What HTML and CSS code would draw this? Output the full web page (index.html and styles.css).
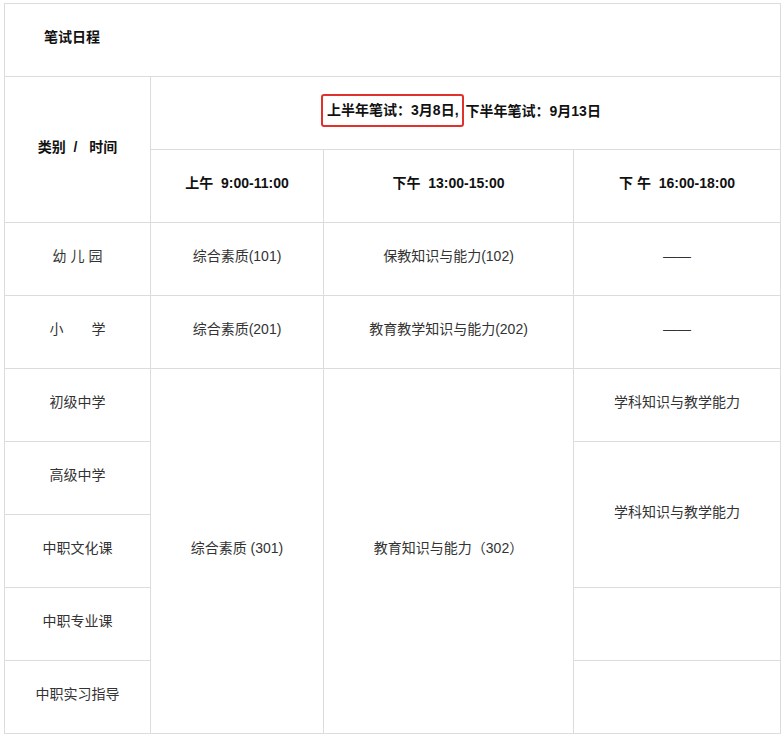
FILE: index.html
```html
<!DOCTYPE html>
<html lang="zh">
<head>
<meta charset="utf-8">
<link rel="stylesheet" href="styles.css">
</head>
<body>
<table class="sched">
  <colgroup>
    <col class="c1"><col class="c2"><col class="c3"><col class="c4">
  </colgroup>
  <tr>
    <td colspan="4" class="title">笔试日程</td>
  </tr>
  <tr>
    <td rowspan="2" class="bold">类别 &nbsp;/ &nbsp;&nbsp;时间</td>
    <td colspan="3" class="bold"><span class="mark">上半年笔试：3月8日,</span>下半年笔试：9月13日</td>
  </tr>
  <tr>
    <td class="bold">上午&nbsp; 9:00-11:00</td>
    <td class="bold">下午&nbsp; 13:00-15:00</td>
    <td class="bold">下 午&nbsp; 16:00-18:00</td>
  </tr>
  <tr>
    <td>幼 儿 园</td>
    <td>综合素质(101)</td>
    <td>保教知识与能力(102)</td>
    <td>——</td>
  </tr>
  <tr>
    <td>小　　学</td>
    <td>综合素质(201)</td>
    <td>教育教学知识与能力(202)</td>
    <td>——</td>
  </tr>
  <tr>
    <td>初级中学</td>
    <td rowspan="5">综合素质 (301)</td>
    <td rowspan="5">教育知识与能力（302）</td>
    <td>学科知识与教学能力</td>
  </tr>
  <tr>
    <td>高级中学</td>
    <td rowspan="2">学科知识与教学能力</td>
  </tr>
  <tr>
    <td>中职文化课</td>
  </tr>
  <tr>
    <td>中职专业课</td>
    <td></td>
  </tr>
  <tr>
    <td>中职实习指导</td>
    <td></td>
  </tr>
</table>
</body>
</html>
```
FILE: styles.css
```css
html, body {
  background: #fff;
}
body {
  margin: 3px 0 0 4px;
  font-family: "Liberation Sans", "Noto Sans CJK SC", sans-serif;
  font-size: 14px;
  color: #333;
}
.sched {
  border-collapse: collapse;
  table-layout: fixed;
  width: 776px;
}
.c1 { width: 146px; }
.c2 { width: 173px; }
.c3 { width: 250px; }
.c4 { width: 207px; }
.sched td {
  border: 1px solid #dcdcdc;
  height: 66px;
  padding: 0 0 6px 0;
  text-align: center;
  vertical-align: middle;
  line-height: 20px;
}
.sched td.title {
  text-align: left;
  padding-left: 39px;
  font-weight: bold;
  color: #111;
}
.sched td.bold {
  font-weight: bold;
  color: #111;
}
.mark {
  display: inline-block;
  border: 2px solid #e0322d;
  border-radius: 3px;
  padding: 4px 3px 5px 4px;
  margin-left: -9px;
  margin-right: 2px;
  white-space: nowrap;
  vertical-align: 1px;
}
```
